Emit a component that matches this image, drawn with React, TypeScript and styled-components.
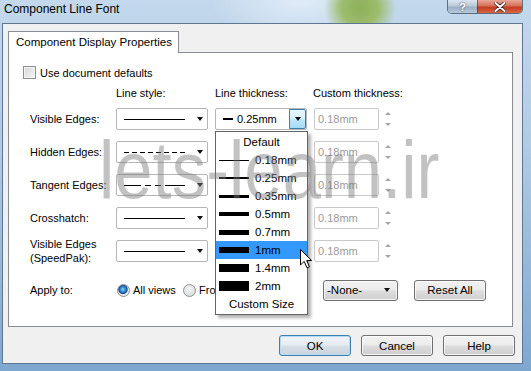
import React from 'react';
import styled, { createGlobalStyle, css } from 'styled-components';

const GlobalStyle = createGlobalStyle`
  html, body {
    margin: 0;
    padding: 0;
  }
  body {
    width: 531px;
    height: 371px;
    overflow: hidden;
    font-family: 'Segoe UI', 'Liberation Sans', Arial, sans-serif;
  }
  * {
    box-sizing: border-box;
  }
`;

const Window = styled.div`
  position: relative;
  width: 531px;
  height: 371px;
  overflow: hidden;
  display: flex;
  flex-direction: column;
  color: #000;
  background:
    radial-gradient(ellipse 36px 34px at 360px 8px, #8cb05a 0%, #9cbc6c 50%, rgba(156, 188, 108, 0) 100%),
    radial-gradient(ellipse 90px 40px at 300px 2px, rgba(230, 240, 250, 0.8), rgba(230, 240, 250, 0)),
    linear-gradient(180deg, #c3d8ec 0%, #afcbe5 40%, #7ea7d0 100%);
`;

const TitleBar = styled.div`
  flex: none;
  height: 23px;
  display: flex;
  justify-content: space-between;
  align-items: flex-start;
`;

const Title = styled.div`
  font-size: 12px;
  line-height: 14px;
  padding: 2px 0 0 4px;
`;

const CaptionGroup = styled.div`
  display: flex;
  height: 14px;
  margin-right: 8px;
  border: 1px solid rgba(40, 55, 75, 0.65);
  border-top: none;
  border-radius: 0 0 5px 5px;
  overflow: hidden;
`;

const CaptionButton = styled.div<{ $close?: boolean }>`
  width: ${({ $close }) => ($close ? 45 : 29)}px;
  display: flex;
  align-items: center;
  justify-content: center;
  color: #fff;
  font-size: 11px;
  font-weight: bold;
  text-shadow: 0 0 2px #334;
  background: ${({ $close }) =>
    $close
      ? 'linear-gradient(180deg, #e9a797 0%, #d8705a 45%, #c23d23 55%, #d9653e 100%)'
      : 'linear-gradient(180deg, #dbe5ef 0%, #b9c9d9 45%, #9cb0c5 55%, #b7c8d8 100%)'};
  & + & {
    border-left: 1px solid rgba(40, 55, 75, 0.55);
  }
`;

const Client = styled.div`
  flex: 1;
  margin: 0 8px 7px 2px;
  background: #f0f0f0;
  border: 1px solid #5e7690;
  padding: 7px 7px 7px 5px;
  display: flex;
  flex-direction: column;
`;

const TabStrip = styled.div`
  position: relative;
  z-index: 2;
  display: flex;
  height: 22px;
`;

const Tab = styled.div`
  width: 171px;
  height: 22px;
  background: #fff;
  border: 1px solid #898c95;
  border-bottom: none;
  font-size: 11.5px;
  line-height: 20px;
  padding-left: 7px;
`;

const Panel = styled.div`
  margin: -1px 2px 0 0;
  height: 275px;
  background: #fff;
  border: 1px solid #898c95;
  padding: 13px 0 0 14px;
  display: flex;
  flex-direction: column;
  font-size: 11px;
`;

const CheckRow = styled.label`
  display: flex;
  align-items: center;
  gap: 4px;
  height: 13px;
`;

const CheckBox = styled.span`
  width: 13px;
  height: 13px;
  border: 1px solid #8e8f8f;
  background: linear-gradient(135deg, #d3d6da 0%, #f7f7f7 100%);
  box-shadow: inset 0 0 0 1px #f4f4f4;
`;

const columns = css`
  display: grid;
  grid-template-columns: 79px 92px 92px 80px;
  column-gap: 7px;
  padding-left: 7px;
`;

const HeaderRow = styled.div`
  ${columns};
  margin-top: 7px;
  height: 14px;
  line-height: 14px;
  white-space: nowrap;
  span:last-child {
    margin-left: -1px;
  }
`;

const FormGrid = styled.div`
  ${columns};
  margin-top: 8px;
  grid-auto-rows: 22px;
  row-gap: 11px;
  align-items: center;
`;

const RowLabel = styled.span`
  line-height: 14px;
`;

const Combo = styled.div`
  position: relative;
  height: 22px;
  display: flex;
  align-items: center;
  background: #fff;
  border: 1px solid #b5b5b5;
  border-radius: 2px;
  padding-left: 7px;
`;

const Arrow = styled.span`
  position: absolute;
  right: 4px;
  top: 50%;
  margin-top: -2px;
  width: 0;
  height: 0;
  border-left: 3.5px solid transparent;
  border-right: 3.5px solid transparent;
  border-top: 4px solid #111;
`;

const DropButton = styled.span`
  position: absolute;
  right: 0;
  top: 0;
  bottom: 0;
  width: 17px;
  border: 1px solid #3c7fb1;
  border-radius: 0 2px 2px 0;
  background: linear-gradient(180deg, #eaf6fd 0%, #d9f0fc 45%, #bee6fd 55%, #a7d9f5 100%);
  ${Arrow} {
    right: 4px;
  }
`;

const ComboWrap = styled.div`
  position: relative;
  height: 22px;
`;

const Swatch = styled.span<{ $thick: number; $width?: number }>`
  flex: none;
  width: ${({ $width }) => $width ?? 30}px;
  height: ${({ $thick }) => $thick}px;
  background: #000;
`;

const ComboValue = styled.span`
  display: flex;
  align-items: center;
  gap: 4px;
`;

const DropList = styled.div`
  position: absolute;
  z-index: 5;
  left: 0;
  top: 23px;
  width: 93px;
  padding: 1px 0;
  background: #fff;
  border: 1px solid #646464;
  box-shadow: 3px 3px 3px rgba(0, 0, 0, 0.3);
`;

const ListItem = styled.div<{ $active?: boolean; $center?: boolean }>`
  height: 18px;
  display: flex;
  align-items: center;
  justify-content: ${({ $center }) => ($center ? 'center' : 'flex-start')};
  gap: 6px;
  padding-left: ${({ $center }) => ($center ? 0 : 3)}px;
  background: ${({ $active }) => ($active ? '#3399ff' : 'transparent')};
  font-size: 11.5px;
`;

const SpinField = styled.div`
  display: flex;
  align-items: center;
  height: 22px;
`;

const Field = styled.div`
  width: 65px;
  height: 22px;
  border: 1px solid #c9c9c9;
  border-radius: 2px;
  background: #fff;
  color: #9a9a9a;
  padding-left: 3px;
  line-height: 20px;
`;

const Spin = styled.div`
  margin-left: 4px;
  width: 9px;
  display: flex;
  flex-direction: column;
  align-items: center;
  gap: 8px;
`;

const SpinArrow = styled.span<{ $down?: boolean }>`
  width: 0;
  height: 0;
  border-left: 3px solid transparent;
  border-right: 3px solid transparent;
  ${({ $down }) =>
    $down ? 'border-top: 3px solid #a5a5a5;' : 'border-bottom: 3px solid #a5a5a5;'}
`;

const ApplyRow = styled.div`
  display: flex;
  align-items: center;
  height: 22px;
  margin-top: 17px;
  padding-left: 7px;
`;

const ApplyLabel = styled.span`
  width: 86px;
`;

const RadioOption = styled.label<{ $width: number }>`
  width: ${({ $width }) => $width}px;
  display: flex;
  align-items: center;
  gap: 3px;
  padding-left: 1px;
  white-space: nowrap;
  overflow: hidden;
`;

const Radio = styled.span<{ $checked?: boolean }>`
  flex: none;
  width: 13px;
  height: 13px;
  border-radius: 50%;
  border: 1px solid #8e8f8f;
  background: ${({ $checked }) =>
    $checked
      ? 'radial-gradient(circle at 45% 40%, #8fd3fb 0%, #2f82cc 30%, #1b4d8c 48%, #eef0f2 58%, #d6d9dd 100%)'
      : 'radial-gradient(circle at 45% 40%, #f7f7f7 0%, #e2e4e6 55%, #cfd3d7 100%)'};
`;

const buttonFace = css`
  height: 21px;
  border: 1px solid #707070;
  border-radius: 3px;
  background: linear-gradient(180deg, #f2f2f2 0%, #ebebeb 48%, #dddddd 52%, #cfcfcf 100%);
  box-shadow: inset 0 0 0 1px rgba(255, 255, 255, 0.75);
  font-family: inherit;
  font-size: 11.5px;
  color: #000;
  padding: 0;
`;

const NoneCombo = styled.div`
  ${buttonFace};
  position: relative;
  width: 75px;
  display: flex;
  align-items: center;
  padding-left: 3px;
  ${Arrow} {
    right: 7px;
  }
`;

const PushButton = styled.button<{ $default?: boolean }>`
  ${buttonFace};
  width: 72px;
  ${({ $default }) =>
    $default &&
    css`
      border-color: #3c7fb1;
      box-shadow: inset 0 0 0 1px #b6dcf3;
      background: linear-gradient(180deg, #eef3f7 0%, #e6edf2 48%, #d7dfe6 52%, #cbd5de 100%);
    `}
`;

const ResetButton = styled(PushButton)`
  margin-left: 16px;
`;

const ButtonRow = styled.div`
  display: flex;
  justify-content: flex-end;
  gap: 10px;
  margin-top: 8px;
`;

const Watermark = styled.div`
  position: absolute;
  z-index: 8;
  left: 99px;
  top: 130px;
  font-family: 'Liberation Sans', Arial, sans-serif;
  font-size: 81px;
  line-height: 1;
  color: rgba(120, 120, 120, 0.45);
  transform: scaleX(0.85);
  transform-origin: left top;
  white-space: nowrap;
  pointer-events: none;
`;

const Cursor = styled.svg`
  position: absolute;
  z-index: 9;
  left: 300px;
  top: 249px;
`;

type Pattern = 'solid' | 'hidden' | 'tangent';

const LineSample: React.FC<{ pattern: Pattern }> = ({ pattern }) => {
  const dash =
    pattern === 'hidden' ? '5 3' : pattern === 'tangent' ? '17 4 6 4 6 4 20' : undefined;
  return (
    <svg width="62" height="3" style={{ display: 'block' }}>
      <line x1="0" y1="1.5" x2="61" y2="1.5" stroke="#000" strokeWidth="1" strokeDasharray={dash} />
    </svg>
  );
};

const LineStyleCombo: React.FC<{ pattern: Pattern }> = ({ pattern }) => (
  <Combo>
    <LineSample pattern={pattern} />
    <Arrow />
  </Combo>
);

const thicknesses: { label: string; thick: number }[] = [
  { label: '0.18mm', thick: 1 },
  { label: '0.25mm', thick: 2 },
  { label: '0.35mm', thick: 3 },
  { label: '0.5mm', thick: 4 },
  { label: '0.7mm', thick: 5 },
  { label: '1mm', thick: 6 },
  { label: '1.4mm', thick: 8 },
  { label: '2mm', thick: 10 },
];

const CustomThickness: React.FC = () => (
  <SpinField>
    <Field>0.18mm</Field>
    <Spin>
      <SpinArrow />
      <SpinArrow $down />
    </Spin>
  </SpinField>
);

const ThicknessCombo: React.FC<{ open?: boolean }> = ({ open }) => (
  <ComboWrap>
    <Combo>
      <ComboValue>
        <Swatch $thick={2} $width={10} />
        0.25mm
      </ComboValue>
      {open ? (
        <DropButton>
          <Arrow />
        </DropButton>
      ) : (
        <Arrow />
      )}
    </Combo>
    {open && (
      <DropList>
        <ListItem $center>Default</ListItem>
        {thicknesses.map(t => (
          <ListItem key={t.label} $active={t.label === '1mm'}>
            <Swatch $thick={t.thick} />
            {t.label}
          </ListItem>
        ))}
        <ListItem $center>Custom Size</ListItem>
      </DropList>
    )}
  </ComboWrap>
);

const rows: { label: React.ReactNode; pattern: Pattern }[] = [
  { label: 'Visible Edges:', pattern: 'solid' },
  { label: 'Hidden Edges:', pattern: 'hidden' },
  { label: 'Tangent Edges:', pattern: 'tangent' },
  { label: 'Crosshatch:', pattern: 'solid' },
  {
    label: (
      <>
        Visible Edges
        <br />
        (SpeedPak):
      </>
    ),
    pattern: 'solid',
  },
];

const App: React.FC = () => (
  <>
    <GlobalStyle />
    <Window>
      <TitleBar>
        <Title>Component Line Font</Title>
        <CaptionGroup>
          <CaptionButton>?</CaptionButton>
          <CaptionButton $close>
            <svg width="12" height="10" viewBox="0 0 12 10">
              <path d="M1.5 1 L10.5 9 M10.5 1 L1.5 9" stroke="#3a2020" strokeWidth="3.6" strokeLinecap="round" />
              <path d="M1.5 1 L10.5 9 M10.5 1 L1.5 9" stroke="#fff" strokeWidth="2" strokeLinecap="round" />
            </svg>
          </CaptionButton>
        </CaptionGroup>
      </TitleBar>

      <Client>
        <TabStrip>
          <Tab>Component Display Properties</Tab>
        </TabStrip>
        <Panel>
          <CheckRow>
            <CheckBox />
            Use document defaults
          </CheckRow>

          <HeaderRow>
            <span />
            <span>Line style:</span>
            <span>Line thickness:</span>
            <span>Custom thickness:</span>
          </HeaderRow>

          <FormGrid>
            {rows.map((row, idx) => (
              <React.Fragment key={idx}>
                <RowLabel>{row.label}</RowLabel>
                <LineStyleCombo pattern={row.pattern} />
                <ThicknessCombo open={idx === 0} />
                <CustomThickness />
              </React.Fragment>
            ))}
          </FormGrid>

          <ApplyRow>
            <ApplyLabel>Apply to:</ApplyLabel>
            <RadioOption $width={66}>
              <Radio $checked />
              All views
            </RadioOption>
            <RadioOption $width={141}>
              <Radio />
              From view:
            </RadioOption>
            <NoneCombo>
              -None-
              <Arrow />
            </NoneCombo>
            <ResetButton>Reset All</ResetButton>
          </ApplyRow>
        </Panel>

        <ButtonRow>
          <PushButton $default>OK</PushButton>
          <PushButton>Cancel</PushButton>
          <PushButton>Help</PushButton>
        </ButtonRow>
      </Client>

      <Watermark>lets-learn.ir</Watermark>

      <Cursor width="13" height="20" viewBox="0 0 13 20">
        <path d="M0.5 0.5 L0.5 16 L4.2 12.4 L7 18.8 L9.4 17.8 L6.7 11.5 L11.6 11.5 Z" fill="#fff" stroke="#000" strokeWidth="1" strokeLinejoin="round" />
      </Cursor>
    </Window>
  </>
);

export default App;
